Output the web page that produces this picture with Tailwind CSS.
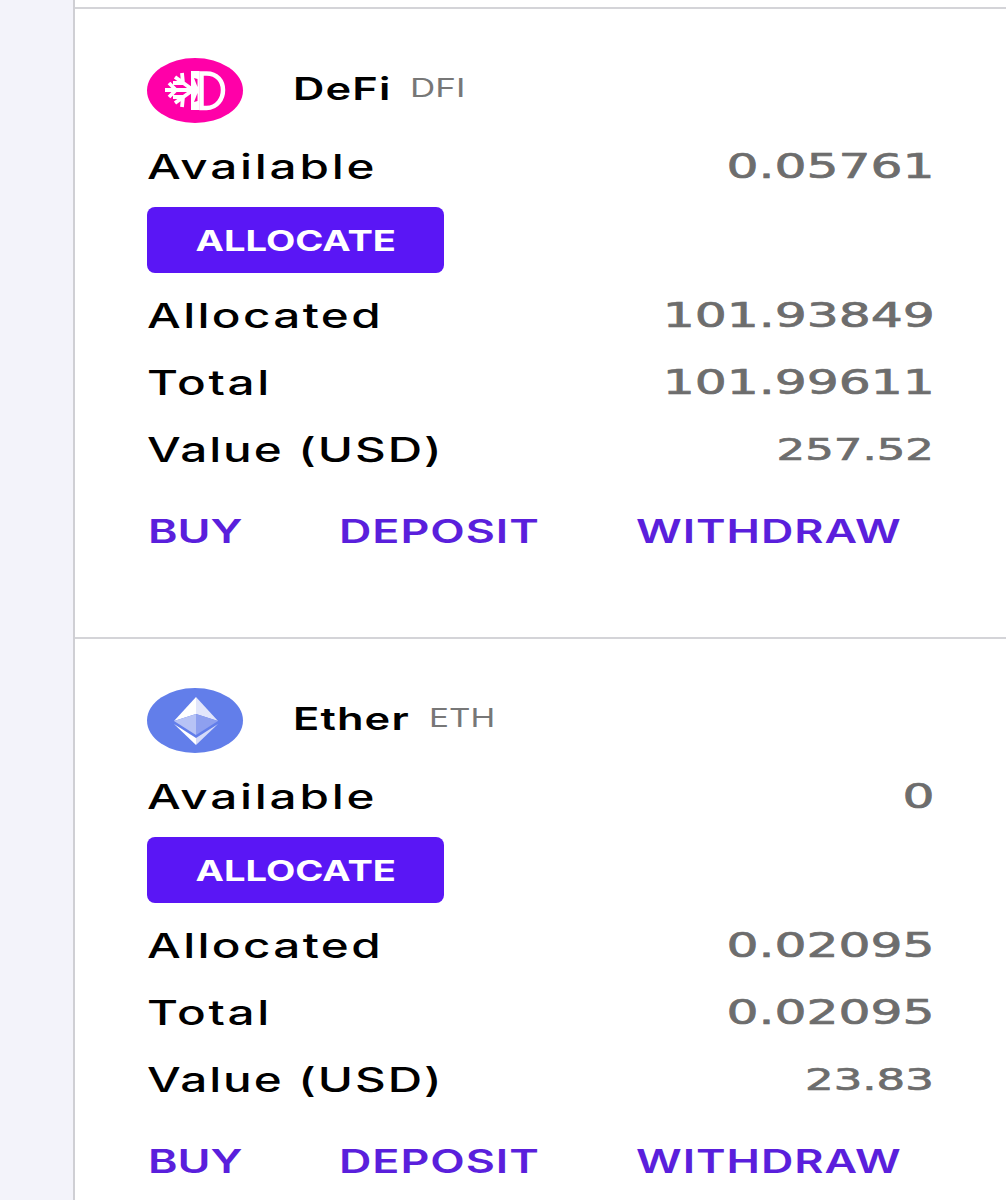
<!DOCTYPE html>
<html><head><script src="https://cdn.jsdelivr.net/npm/@tailwindcss/browser@4"></script></head>
<body class="bg-[#f3f3fa] overflow-hidden font-['Inter',sans-serif]">
<div class="ml-[73px] h-[1200px] overflow-hidden bg-white border-l-2 border-[#cfcfd4]">
<div class="h-[9px] border-b-2 border-[#d4d4d8]"></div>

<section class="h-[630px] border-b-2 border-[#d4d4d8] pl-[72px] pr-[73px] pt-[48px]">
<div class="flex items-center h-[66px]">
<svg class="w-[97px] h-[66px]" viewBox="0 0 97 66"><ellipse cx="48" cy="33.500" rx="48" ry="32.500" fill="#ff00a8"/><path d="M54.500 16.500h5c11 0 16.500 8 16.500 16.500s-5.500 18-16.500 18h-5z" fill="none" stroke="#fff" stroke-width="4.500"/><path d="M44 14h8.500v39H44z" fill="#fff"/><path d="M47 21l3.500 1v8zM47 45l3.500-1v-8z" fill="#ff00a8"/><g stroke="#fff" stroke-width="3.800" fill="none"><path d="M18 33H46M46 33 28 20M46 33 28 46M29 33l-7-7M29 33l-7 7M36 26l-1-10M36 26l-10 0M36 40l-1 10M36 40l-10 0"/></g></svg>
<div class="ml-[49px] pb-[2px] text-[31px] font-semibold text-black tracking-[0.800px] origin-left scale-x-[1.4]">DeFi</div>
<div class="ml-[47px] pb-[2px] text-[25px] text-[#777] origin-left scale-x-[1.4]">DFI</div>
</div>
<div class="flex justify-between items-center h-[44px] mt-[21px] text-[34px] font-medium"><span class="text-black tracking-[2px] origin-left scale-x-[1.4]">Available</span><span class="font-['DejaVu_Sans'] font-normal text-[#6d6d6d] [-webkit-text-stroke:0.7px_#6d6d6d] mr-[-2px] origin-right scale-x-[1.48]">0.05761</span></div>
<div class="mt-[19px] w-[297px] h-[66px] rounded-lg bg-[#5a16f5] text-white font-bold text-[28px] flex items-center justify-center pt-[1px]"><span class="scale-x-[1.36]">ALLOCATE</span></div>
<div class="flex justify-between items-center h-[44px] mt-[20px] text-[34px] font-medium"><span class="text-black tracking-[1.700px] origin-left scale-x-[1.4]">Allocated</span><span class="font-['DejaVu_Sans'] font-normal text-[#6d6d6d] [-webkit-text-stroke:0.7px_#6d6d6d] mr-[-2px] origin-right scale-x-[1.48]">101.93849</span></div>
<div class="flex justify-between items-center h-[44px] mt-[23px] text-[34px] font-medium"><span class="text-black tracking-[1.900px] origin-left scale-x-[1.4]">Total</span><span class="font-['DejaVu_Sans'] font-normal text-[#6d6d6d] [-webkit-text-stroke:0.7px_#6d6d6d] mr-[-2px] origin-right scale-x-[1.48]">101.99611</span></div>
<div class="flex justify-between items-center h-[44px] mt-[23px] text-[34px] font-medium"><span class="text-black tracking-[1.400px] origin-left scale-x-[1.4]">Value (USD)</span><span class="font-['DejaVu_Sans'] font-normal text-[#6d6d6d] [-webkit-text-stroke:0.7px_#6d6d6d] text-[30px] mr-[-1px] origin-right scale-x-[1.5]">257.52</span></div>
<div class="flex mt-[37px] text-[#5a1fdc] font-semibold text-[32px] tracking-[0.700px]"><span class="w-[191px] ml-[1px] tracking-normal origin-left scale-x-[1.4]">BUY</span><span class="w-[297px] origin-left scale-x-[1.4]">DEPOSIT</span><span class="origin-left scale-x-[1.4]">WITHDRAW</span></div>
</section>

<section class="pl-[72px] pr-[73px] pt-[48px]">
<div class="flex items-center h-[66px]">
<svg class="w-[97px] h-[66px]" viewBox="0 0 97 66"><ellipse cx="48" cy="33.500" rx="48" ry="32.500" fill="#627eea"/><path d="M49 10 27 34l22-7z" fill="#fff"/><path d="M49 10l22 24-22-7z" fill="#e2e6fb"/><path d="M27 34l22 14V27z" fill="#b7c3f5"/><path d="M71 34 49 48V27z" fill="#8ea0ef"/><path d="M27 37l22 21v-7z" fill="#fff"/><path d="M71 37 49 58v-7z" fill="#d5dbf9"/></svg>
<div class="ml-[49px] pb-[2px] text-[31px] font-semibold text-black tracking-[0.800px] origin-left scale-x-[1.4]">Ether</div>
<div class="ml-[53px] pb-[2px] text-[25px] text-[#777] origin-left scale-x-[1.33]">ETH</div>
</div>
<div class="flex justify-between items-center h-[44px] mt-[21px] text-[34px] font-medium"><span class="text-black tracking-[2px] origin-left scale-x-[1.4]">Available</span><span class="font-['DejaVu_Sans'] font-normal text-[#6d6d6d] [-webkit-text-stroke:0.7px_#6d6d6d] mr-[-2px] origin-right scale-x-[1.48]">0</span></div>
<div class="mt-[19px] w-[297px] h-[66px] rounded-lg bg-[#5a16f5] text-white font-bold text-[28px] flex items-center justify-center pt-[1px]"><span class="scale-x-[1.36]">ALLOCATE</span></div>
<div class="flex justify-between items-center h-[44px] mt-[20px] text-[34px] font-medium"><span class="text-black tracking-[1.700px] origin-left scale-x-[1.4]">Allocated</span><span class="font-['DejaVu_Sans'] font-normal text-[#6d6d6d] [-webkit-text-stroke:0.7px_#6d6d6d] mr-[-2px] origin-right scale-x-[1.48]">0.02095</span></div>
<div class="flex justify-between items-center h-[44px] mt-[23px] text-[34px] font-medium"><span class="text-black tracking-[1.900px] origin-left scale-x-[1.4]">Total</span><span class="font-['DejaVu_Sans'] font-normal text-[#6d6d6d] [-webkit-text-stroke:0.7px_#6d6d6d] mr-[-2px] origin-right scale-x-[1.48]">0.02095</span></div>
<div class="flex justify-between items-center h-[44px] mt-[23px] text-[34px] font-medium"><span class="text-black tracking-[1.400px] origin-left scale-x-[1.4]">Value (USD)</span><span class="font-['DejaVu_Sans'] font-normal text-[#6d6d6d] [-webkit-text-stroke:0.7px_#6d6d6d] text-[30px] mr-[-1px] origin-right scale-x-[1.5]">23.83</span></div>
<div class="flex mt-[37px] text-[#5a1fdc] font-semibold text-[32px] tracking-[0.700px]"><span class="w-[191px] ml-[1px] tracking-normal origin-left scale-x-[1.4]">BUY</span><span class="w-[297px] origin-left scale-x-[1.4]">DEPOSIT</span><span class="origin-left scale-x-[1.4]">WITHDRAW</span></div>
</section>
</div>
</body></html>
